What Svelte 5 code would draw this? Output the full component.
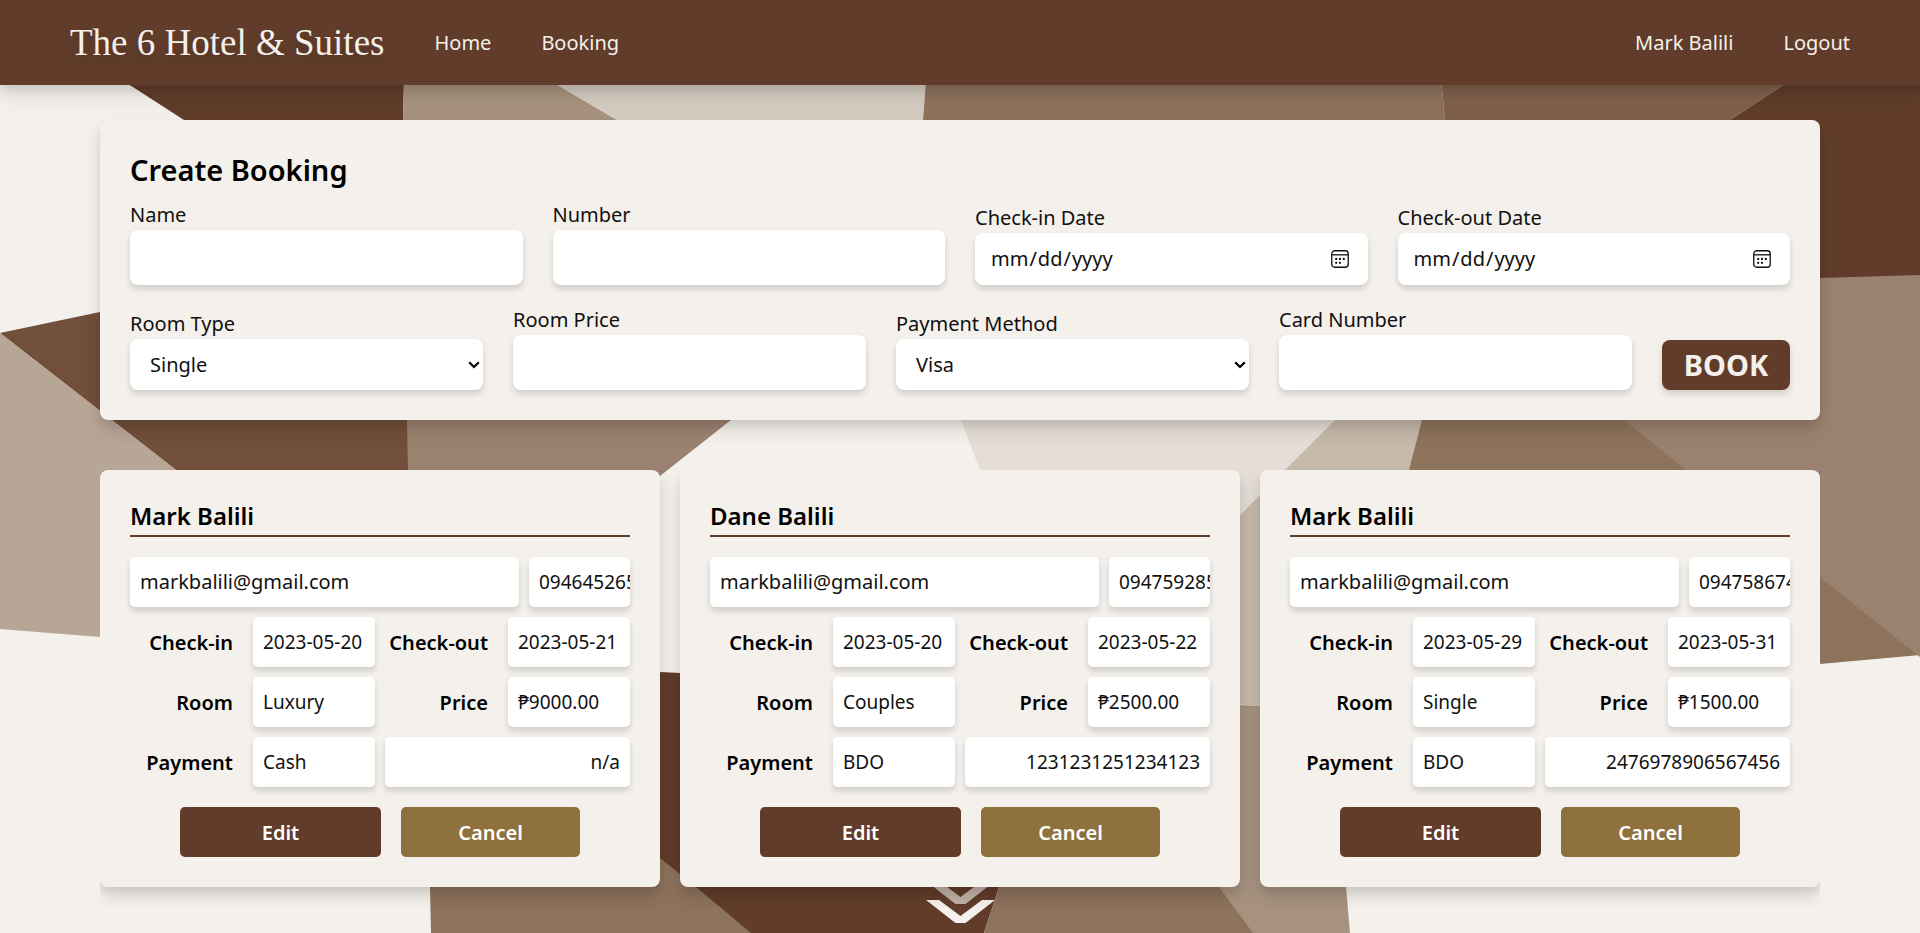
<script>
  const bookings = [
    { name: 'Mark Balili', email: 'markbalili@gmail.com', number: '094645265', checkIn: '2023-05-20', checkOut: '2023-05-21', room: 'Luxury', price: '₱9000.00', payment: 'Cash', card: 'n/a' },
    { name: 'Dane Balili', email: 'markbalili@gmail.com', number: '094759285', checkIn: '2023-05-20', checkOut: '2023-05-22', room: 'Couples', price: '₱2500.00', payment: 'BDO', card: '1231231251234123' },
    { name: 'Mark Balili', email: 'markbalili@gmail.com', number: '094758674', checkIn: '2023-05-29', checkOut: '2023-05-31', room: 'Single', price: '₱1500.00', payment: 'BDO', card: '2476978906567456' }
  ];

  // Facets of the geometric backdrop, painted in order.
  const facets = [
    { fill: '#613c2a', points: '122,80 404,80 403,120 403,300 184,120' },
    { fill: '#a7927f', points: '404,80 549,80 617,120 700,300 403,300 403,120' },
    { fill: '#d4cbc0', points: '549,80 926,80 923,120 915,300 700,300 617,120' },
    { fill: '#8d725c', points: '926,80 1441,80 1445,120 1460,300 915,300 923,120' },
    { fill: '#80604b', points: '1441,80 1791,80 1730,120 1460,300 1445,120' },
    { fill: '#613c2a', points: '1791,80 1920,80 1920,276 1820,279 1460,300 1730,120' },
    { fill: '#714f3a', points: '0,333 100,312 403,250 411,470 411,640 176,470' },
    { fill: '#b7a595', points: '0,333 176,470 411,655 100,637 0,629' },
    { fill: '#9b8270', points: '407,420 407,300 880,300 731,420 660,476 411,640' },
    { fill: '#e5ddd6', points: '961,420 930,320 1430,320 1335,420 1240,515 1100,640 980,470' },
    { fill: '#c5b9aa', points: '1335,420 1440,320 1448,320 1425,420 1409,470 1350,712 1100,695 1240,515' },
    { fill: '#8d725c', points: '1448,320 1500,320 1700,420 1920,577 1920,655 1820,664 1350,706 1409,470' },
    { fill: '#9b8270', points: '1460,289 1820,278 1920,275 1920,657 1820,577 1624,420' },
    { fill: '#613c2a', points: '425,660 660,672 680,673 1065,693 999,887 984,933 700,933 425,700' },
    { fill: '#8d725c', points: '425,665 660,858 696,887 751,933 431,933 430,887' },
    { fill: '#a7927f', points: '1065,693 1240,705 1260,706 1336,711 1346,887 1350,933 1240,933 1200,887' },
    { fill: '#8d725c', points: '1065,630 1219,887 1253,933 984,933 999,887' }
  ];
</script>

{#snippet calendar()}
  <svg class="calendar" viewBox="0 0 18 18" aria-hidden="true">
    <rect x="0.75" y="0.75" width="16.5" height="16.5" rx="3" fill="none" stroke="#111" stroke-width="1.3" />
    <path d="M1 4.8H17" stroke="#111" stroke-width="1.3" />
    <g fill="#111">
      <circle cx="5.2" cy="9" r="1.15" />
      <circle cx="9" cy="9" r="1.15" />
      <circle cx="12.8" cy="9" r="1.15" />
      <circle cx="5.2" cy="12.8" r="1.15" />
      <circle cx="9" cy="12.8" r="1.15" />
    </g>
  </svg>
{/snippet}

{#snippet chevron()}
  <svg class="chevron" viewBox="0 0 12 8" aria-hidden="true">
    <path d="M1.2 1.2L6 6L10.8 1.2" fill="none" stroke="#000" stroke-width="2.2" />
  </svg>
{/snippet}

<div class="page">
  <svg class="backdrop" viewBox="0 0 1920 933" preserveAspectRatio="none" aria-hidden="true">
    {#each facets as facet}
      <polygon points={facet.points} fill={facet.fill} />
    {/each}
  </svg>
  <svg class="scroll-hint" viewBox="0 0 69 42" aria-hidden="true">
    <polygon points="0,0 13,0 34.5,16 56,0 69,0 39.5,23 29.5,23" fill="#f4f0eb" opacity="0.65" />
    <polygon points="0,19 13,19 34.5,35 56,19 69,19 39.5,42 29.5,42" fill="#f4f0eb" />
  </svg>

  <header>
    <a class="logo" href="/">The 6 Hotel &amp; Suites</a>
    <nav>
      <a href="/">Home</a>
      <a href="/booking">Booking</a>
    </nav>
    <nav class="account">
      <a href="/account">Mark Balili</a>
      <a href="/logout">Logout</a>
    </nav>
  </header>

  <main>
    <form class="panel" onsubmit={(e) => e.preventDefault()}>
      <h1>Create Booking</h1>
      <div class="row">
        <div class="field"><label for="name">Name</label><input id="name" type="text" /></div>
        <div class="field"><label for="number">Number</label><input id="number" type="text" /></div>
        <div class="field">
          <label for="checkin">Check-in Date</label>
          <div class="control"><input id="checkin" type="date" />{@render calendar()}</div>
        </div>
        <div class="field">
          <label for="checkout">Check-out Date</label>
          <div class="control"><input id="checkout" type="date" />{@render calendar()}</div>
        </div>
      </div>
      <div class="row">
        <div class="field">
          <label for="room">Room Type</label>
          <div class="control"><select id="room"><option>Single</option></select>{@render chevron()}</div>
        </div>
        <div class="field"><label for="price">Room Price</label><input id="price" type="text" /></div>
        <div class="field">
          <label for="method">Payment Method</label>
          <div class="control"><select id="method"><option>Visa</option></select>{@render chevron()}</div>
        </div>
        <div class="field"><label for="card">Card Number</label><input id="card" type="text" /></div>
        <button class="book" type="submit">BOOK</button>
      </div>
    </form>

    <section class="cards">
      {#each bookings as b}
        <article class="panel">
          <h2>{b.name}</h2>
          <div class="contact">
            <span class="cell email">{b.email}</span>
            <span class="cell">{b.number}</span>
          </div>
          <dl>
            <dt>Check-in</dt>
            <dd class="cell">{b.checkIn}</dd>
            <dt>Check-out</dt>
            <dd class="cell">{b.checkOut}</dd>
            <dt>Room</dt>
            <dd class="cell">{b.room}</dd>
            <dt>Price</dt>
            <dd class="cell">{b.price}</dd>
            <dt>Payment</dt>
            <dd class="cell">{b.payment}</dd>
            <dd class="cell wide">{b.card}</dd>
          </dl>
          <div class="actions">
            <button class="edit" type="button">Edit</button>
            <button class="cancel" type="button">Cancel</button>
          </div>
        </article>
      {/each}
    </section>
  </main>
</div>

<style>
  :global(body) {
    margin: 0;
    background: #f4f0eb;
  }
  .page {
    position: relative;
    min-height: 100vh;
    font-family: 'Noto Sans', 'Open Sans', sans-serif;
    font-size: 20px;
    color: #000;
    isolation: isolate;
    overflow: hidden;
  }
  .page :global(*) {
    box-sizing: border-box;
  }
  .backdrop {
    position: absolute;
    inset: 0;
    width: 100%;
    height: 100%;
    z-index: -1;
  }
  .scroll-hint {
    position: absolute;
    left: 50%;
    bottom: 10px;
    width: 69px;
    margin-left: -34px;
    z-index: -1;
  }
  header {
    position: relative;
    display: flex;
    align-items: center;
    gap: 50px;
    height: 85px;
    padding: 0 70px;
    background: #613c2a;
    box-shadow: 0 6px 8px rgba(0, 0, 0, 0.08), 0 10px 20px rgba(0, 0, 0, 0.1);
  }
  header a {
    color: #f4f0eb;
    text-decoration: none;
    white-space: nowrap;
  }
  .logo {
    font-family: 'Liberation Serif', serif;
    font-size: 37px;
    text-shadow: 0 8px 8px rgba(0, 0, 0, 0.15);
  }
  nav {
    display: flex;
    gap: 50px;
  }
  .account {
    margin-left: auto;
  }
  main {
    padding: 35px 100px 26px;
  }
  .panel {
    padding: 30px;
    border-radius: 8px;
    background: #f4f0eb;
    box-shadow: 0 6px 8px rgba(0, 0, 0, 0.08), 0 10px 20px rgba(0, 0, 0, 0.1);
  }
  h1 {
    margin: 0 0 10px;
    font-size: 29px;
    line-height: 40px;
    font-weight: 600;
  }
  .row {
    display: flex;
    align-items: flex-end;
    gap: 30px;
  }
  .row + .row {
    margin-top: 20px;
  }
  .field {
    flex: 1 1 0;
    min-width: 0;
    display: flex;
    flex-direction: column;
    line-height: 30px;
  }
  .field label {
    color: #111;
  }
  .field input,
  .field select {
    display: block;
    width: 100%;
    height: 55px;
    margin: 0;
    padding: 0 15px;
    border: 0;
    border-radius: 8px;
    background: #fff;
    color: #111;
    font: inherit;
    box-shadow: 0 4px 6px rgba(0, 0, 0, 0.15);
  }
  .field select {
    appearance: none;
    height: 51px;
    padding: 0 20px;
  }
  .control {
    position: relative;
  }
  .field .control input {
    height: 52px;
  }
  .control input::-webkit-calendar-picker-indicator {
    opacity: 0;
  }
  .calendar {
    position: absolute;
    top: 17px;
    right: 19px;
    width: 18px;
    pointer-events: none;
  }
  .chevron {
    position: absolute;
    top: 22px;
    right: 3px;
    width: 12px;
    pointer-events: none;
  }
  button {
    border: 0;
    border-radius: 5px;
    color: #fff;
    font: inherit;
    font-weight: 600;
    cursor: pointer;
  }
  .book {
    width: 128px;
    height: 50px;
    padding: 0;
    border-radius: 8px;
    background: #613c2a;
    color: #f4f0eb;
    font-size: 29px;
    line-height: 40px;
    font-weight: 700;
    box-shadow: 0 4px 6px rgba(0, 0, 0, 0.15);
  }
  .cards {
    display: grid;
    grid-template-columns: repeat(3, minmax(0, 1fr));
    gap: 20px;
    margin-top: 50px;
    padding-bottom: 20px;
    overflow: hidden;
  }
  h2 {
    margin: 0 0 20px;
    padding-bottom: 3px;
    border-bottom: 2px solid #613c2a;
    font-size: 24px;
    line-height: 32px;
    font-weight: 600;
  }
  .contact {
    display: grid;
    grid-template-columns: minmax(0, 389fr) minmax(0, 101fr);
    gap: 10px;
  }
  dl {
    display: grid;
    grid-template-columns: minmax(0, 113fr) minmax(0, 122fr) minmax(0, 113fr) minmax(0, 122fr);
    gap: 10px;
    margin: 10px 0 20px;
  }
  dt {
    display: flex;
    align-items: center;
    justify-content: flex-end;
    padding-right: 10px;
    font-weight: 600;
    white-space: nowrap;
  }
  .cell {
    margin: 0;
    padding: 0 10px;
    border-radius: 5px;
    background: #fff;
    color: #111;
    font-size: 19px;
    line-height: 50px;
    white-space: nowrap;
    overflow: hidden;
    box-shadow: 0 4px 6px rgba(0, 0, 0, 0.15);
  }
  .email {
    font-size: 20px;
  }
  .wide {
    grid-column: span 2;
    text-align: right;
  }
  .actions {
    display: grid;
    grid-template-columns: 201fr 179fr;
    gap: 20px;
    padding: 0 50px;
  }
  .actions button {
    height: 50px;
  }
  .edit {
    background: #613c2a;
  }
  .cancel {
    background: #8f713d;
  }
</style>
